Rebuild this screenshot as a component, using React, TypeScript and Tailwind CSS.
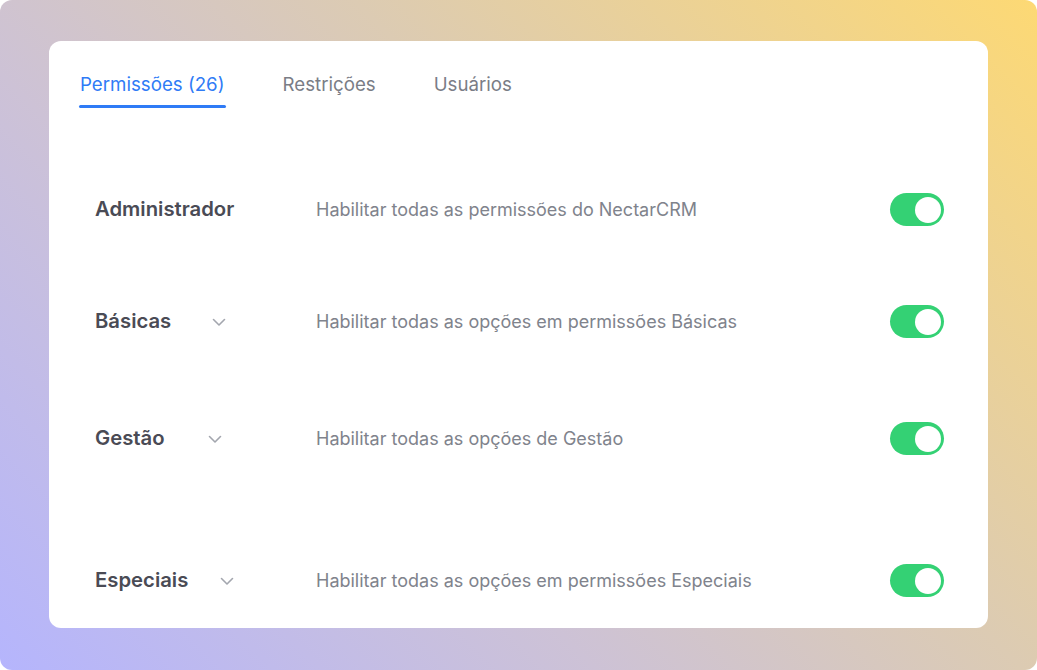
import React from "react";

function Chevron() {
  return (
    <svg width="14" height="9" viewBox="0 0 14 9" fill="none">
      <path d="M1.5 1.5L7 7L12.5 1.5" stroke="#a3a6ae" strokeWidth="1.6" strokeLinecap="round" strokeLinejoin="round" />
    </svg>
  );
}

function Toggle() {
  return (
    <div className="w-[54px] h-[33px] rounded-full bg-[#34d174] flex items-center justify-end pr-[3px]">
      <div className="w-[26px] h-[26px] rounded-full bg-white" />
    </div>
  );
}

const rows = [
  { label: "Administrador", desc: "Habilitar todas as permissões do NectarCRM", chevron: false, mt: "mt-[85px]", cm: "" },
  { label: "Básicas", desc: "Habilitar todas as opções em permissões Básicas", chevron: true, mt: "mt-[79px]", cm: "ml-[41px]" },
  { label: "Gestão", desc: "Habilitar todas as opções de Gestão", chevron: true, mt: "mt-[84px]", cm: "ml-[43px]" },
  { label: "Especiais", desc: "Habilitar todas as opções em permissões Especiais", chevron: true, mt: "mt-[109px]", cm: "ml-[32px]" },
];

export default function App() {
  return (
    <div className="w-[1037px] h-[670px] bg-white" style={{ fontFamily: "Inter, 'Noto Sans', sans-serif" }}>
      <div className="w-full h-full rounded-[12px] bg-[linear-gradient(45deg,#b5b5fd_0%,#cdc2d6_35%,#dccbb3_60%,#fdd974_100%)] pt-[41px] pl-[49px]">
        <div className="w-[939px] h-[587px] bg-white rounded-[12px] pl-[31px] pr-[44px]">
          <div className="flex gap-[58px] pt-[30px]">
            <div className="flex flex-col">
              <span className="text-[18.7px] leading-[28px] text-[#2f7bf6]">Permissões (26)</span>
              <div className="mt-[6px] h-[3px] rounded-full bg-[#2f7bf6] -mx-[1px]" />
            </div>
            <span className="text-[18.7px] leading-[28px] text-[#7a7d86]">Restrições</span>
            <span className="text-[18.7px] leading-[28px] text-[#7a7d86]">Usuários</span>
          </div>
          {rows.map((r) => (
            <div key={r.label} className={`flex items-center h-[33px] pl-[15px] ${r.mt}`}>
              <div className="w-[221px] flex items-center">
                <span className="text-[20.3px] leading-[28px] -mt-[1px] font-semibold text-[#4a4b55]">{r.label}</span>
                {r.chevron && (
                  <span className={`${r.cm} mt-[2px] flex`}>
                    <Chevron />
                  </span>
                )}
              </div>
              <span className="flex-1 text-[18px] text-[#80838c]">{r.desc}</span>
              <Toggle />
            </div>
          ))}
        </div>
      </div>
    </div>
  );
}
